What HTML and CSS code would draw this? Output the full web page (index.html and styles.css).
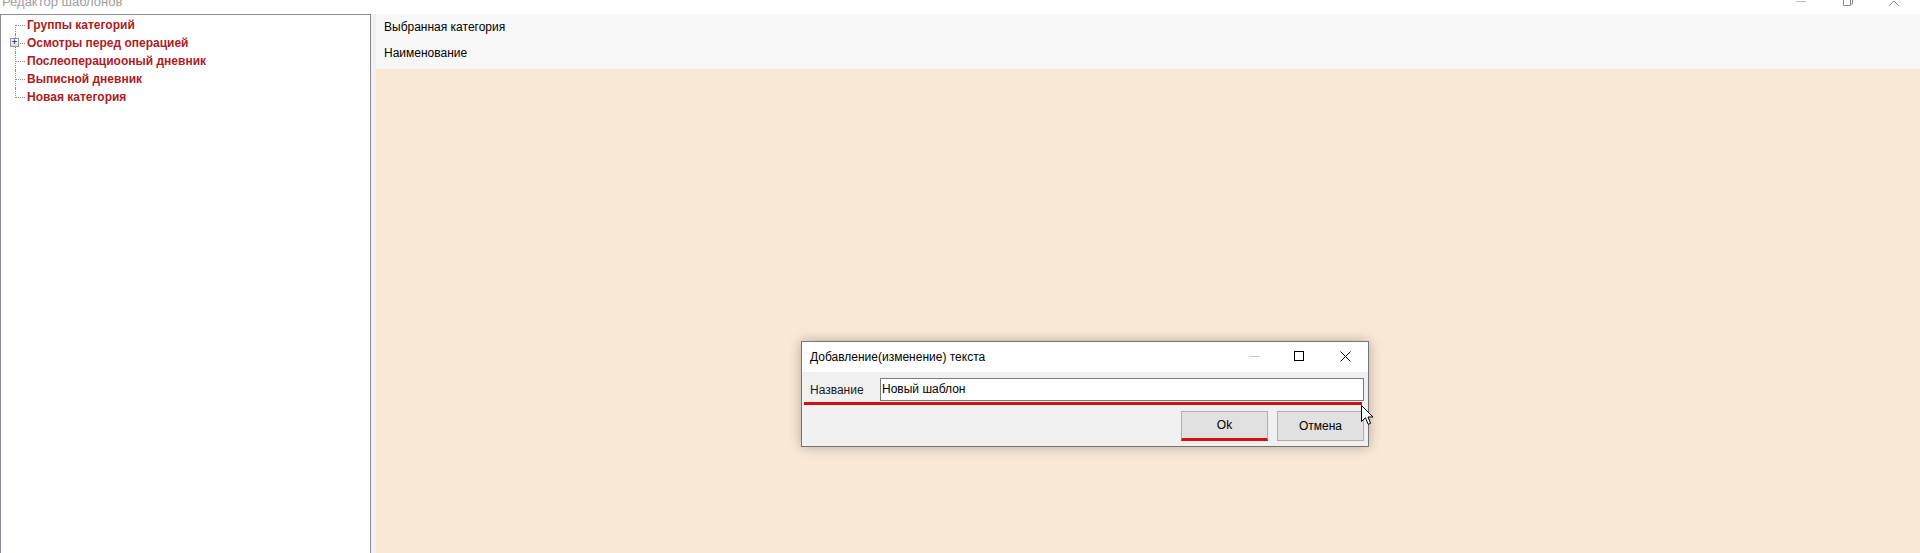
FILE: index.html
```html
<!DOCTYPE html>
<html lang="ru">
<head>
    <meta charset="UTF-8">
    <title>Редактор шаблонов</title>
    <link rel="stylesheet" href="styles.css">
</head>
<body>
    <!-- Window caption, mostly cut off at the top -->
    <div class="caption">
        <span class="caption-title">Редактор шаблонов</span>
        <div class="caption-buttons">
            <svg width="12" height="6" viewBox="0 0 12 6"><line x1="0" y1="1.5" x2="10" y2="1.5" stroke="#bdbdbd"/></svg>
            <svg width="12" height="6" viewBox="0 0 12 6"><path d="M1.5 0 V5.5 H8.5 V0 M3.5 0 V-1 H10.5 V4 H8.5" fill="none" stroke="#8c8c8c"/></svg>
            <svg width="12" height="6" viewBox="0 0 12 6"><path d="M1 6 L6 1 L11 6" fill="none" stroke="#8c8c8c"/></svg>
        </div>
    </div>

    <div class="main">
        <!-- Category tree -->
        <div class="tree">
            <ul class="tree-list">
                <li>Группы категорий</li>
                <li class="has-children"><span class="expander">+</span>Осмотры перед операцией</li>
                <li>Послеоперациооный дневник</li>
                <li>Выписной дневник</li>
                <li>Новая категория</li>
            </ul>
        </div>

        <div class="splitter"></div>

        <div class="content">
            <div class="content-header">
                <div class="header-row">Выбранная категория</div>
                <div class="header-row">Наименование</div>
            </div>
            <div class="content-body">
                <!-- Modal dialog -->
                <div class="dialog">
                    <div class="dialog-title">
                        <span class="dialog-caption">Добавление(изменение) текста</span>
                        <div class="dialog-buttons">
                            <svg class="dlg-min" width="12" height="12" viewBox="0 0 12 12"><line x1="1" y1="5.5" x2="12" y2="5.5" stroke="#c8c8c8"/></svg>
                            <svg class="dlg-max" width="12" height="12" viewBox="0 0 12 12"><rect x="0.5" y="0.5" width="9" height="9" fill="none" stroke="#000"/></svg>
                            <svg class="dlg-close" width="12" height="12" viewBox="0 0 12 12"><path d="M0.5 0.5 L10.5 10.5 M10.5 0.5 L0.5 10.5" stroke="#000" stroke-width="1"/></svg>
                        </div>
                    </div>
                    <div class="dialog-body">
                        <div class="field-row">
                            <label class="field-label">Название</label>
                            <div class="textbox">Новый шаблон</div>
                        </div>
                        <div class="mark mark-field"></div>
                        <div class="button-row">
                            <button class="btn btn-ok">Ok</button>
                            <button class="btn">Отмена</button>
                        </div>
                    </div>
                    <svg class="cursor" width="13" height="21" viewBox="0 0 13 21">
                        <path d="M0.5 0.5 V16.5 L4.5 12.8 L7.2 19.3 L9.6 18.3 L7 12 H12 Z" fill="#fff" stroke="#000" stroke-width="1" stroke-linejoin="miter"/>
                    </svg>
                </div>
            </div>
        </div>
    </div>
</body>
</html>
```

FILE: styles.css
```css
html, body {
    margin: 0;
    height: 100%;
    overflow: hidden;
    background-color: #ffffff;
    font-family: "Liberation Sans", Arial, sans-serif;
    font-size: 12px;
    color: #000;
}

/* Window caption */
.caption {
    height: 14px;
    display: flex;
    justify-content: space-between;
    overflow: hidden;
    background-color: #fff;
}

.caption-title {
    margin-top: -6px;
    margin-left: 2px;
    font-size: 13px;
    line-height: 16px;
    color: #a0a0a0;
}

.caption-buttons {
    display: flex;
    gap: 34px;
    padding-right: 20px;
    align-items: flex-start;
}

.caption-buttons svg {
    overflow: visible;
}

/* Main area */
.main {
    display: flex;
    height: calc(100% - 14px);
}

.tree {
    width: 371px;
    box-sizing: border-box;
    border: 1px solid #8a8d94;
    border-bottom: none;
    padding-top: 1px;
    background-color: #fff;
}

.tree-list {
    list-style: none;
    margin: 0;
    padding: 0 0 0 14px;
}

.tree-list li {
    position: relative;
    height: 18px;
    line-height: 18px;
    padding-left: 11px;
    font-weight: bold;
    font-size: 12px;
    color: #ad1c1f;
    border-left: 1px dotted #8c8c8c;
}

/* horizontal connector */
.tree-list li::before {
    content: "";
    position: absolute;
    left: 0;
    top: 9px;
    width: 9px;
    border-top: 1px dotted #8c8c8c;
}

.tree-list li:first-child {
    border-left-color: transparent;
}

.tree-list li:first-child::after,
.tree-list li:last-child::after {
    content: "";
    position: absolute;
    left: -1px;
    border-left: 1px dotted #8c8c8c;
}

.tree-list li:first-child::after {
    top: 9px;
    height: 9px;
}

.tree-list li:last-child {
    border-left-color: transparent;
}

.tree-list li:last-child::after {
    top: 0;
    height: 10px;
}

.expander {
    position: absolute;
    left: -6px;
    top: 4px;
    width: 9px;
    height: 9px;
    box-sizing: border-box;
    border: 1px solid #979797;
    background: linear-gradient(#ffffff, #dcdcdc);
    color: #1c3ca8;
    font-size: 9px;
    line-height: 7px;
    font-weight: bold;
    text-align: center;
    z-index: 1;
}

.splitter {
    width: 5px;
    background-color: #f2f1f1;
}

.content {
    flex: 1;
    display: flex;
    flex-direction: column;
}

.content-header {
    background-color: #f8f8f8;
    padding-bottom: 3px;
}

.header-row {
    height: 26px;
    line-height: 26px;
    padding-left: 8px;
}

.content-body {
    flex: 1;
    position: relative;
    background-color: #f9e9d6;
}

/* Dialog window */
.dialog {
    position: absolute;
    left: 425px;
    top: 272px;
    width: 568px;
    height: 106px;
    box-sizing: border-box;
    border: 1px solid #747474;
    background-color: #f0f0f0;
    box-shadow: 0 0 12px rgba(0, 0, 0, 0.28);
    display: flex;
    flex-direction: column;
}

.dialog-title {
    height: 30px;
    background-color: #fff;
    display: flex;
    align-items: center;
    justify-content: space-between;
}

.dialog-caption {
    padding-left: 8px;
}

.dialog-buttons {
    display: flex;
    align-items: center;
    gap: 34px;
    padding-right: 16px;
}

.dialog-body {
    flex: 1;
    position: relative;
}

.field-row {
    display: flex;
    align-items: center;
    margin-top: 6px;
    height: 23px;
}

.field-label {
    width: 78px;
    padding-left: 8px;
    box-sizing: border-box;
    color: #1a1a1a;
}

.textbox {
    width: 484px;
    height: 23px;
    box-sizing: border-box;
    border: 1px solid #7a7a7a;
    background-color: #fff;
    line-height: 21px;
    padding-left: 1px;
}

/* red highlight marks */
.mark {
    height: 3px;
    background-color: #d40f0f;
}

.mark-field {
    margin: 1px 6px 0 2px;
}

.button-row {
    display: flex;
    justify-content: flex-end;
    gap: 9px;
    padding-right: 4px;
    margin-top: 6px;
}

.btn {
    width: 87px;
    height: 30px;
    box-sizing: border-box;
    border: 1px solid #adadad;
    background-color: #e1e1e1;
    font-family: inherit;
    font-size: 12px;
    color: #000;
    padding: 0;
}

.btn-ok {
    border-bottom: 3px solid #d40f0f;
}

.cursor {
    position: absolute;
    left: 559px;
    top: 63px;
}
```
